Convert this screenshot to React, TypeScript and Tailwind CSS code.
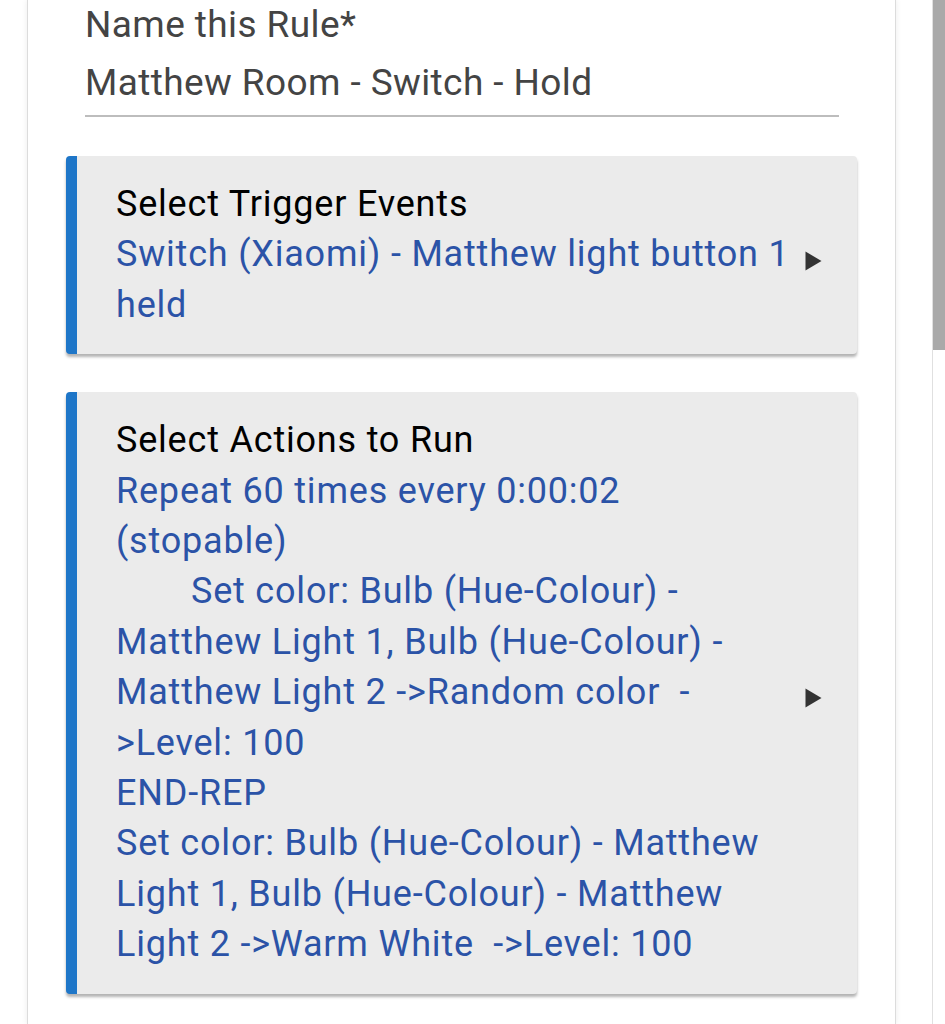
import { useState } from "react";

const Arrow = () => (
  <svg width="17" height="20" viewBox="0 0 17 20" className="shrink-0 translate-y-[6px]">
    <path d="M0.5 0.5 L16.5 10 L0.5 19.5 Z" fill="#333" />
  </svg>
);

interface CardLine {
  text: string;
  indent?: boolean;
}

interface CardProps {
  title: string;
  lines: CardLine[];
}

const RuleCard = ({ title, lines }: CardProps) => {
  return (
    <div className="flex items-center rounded-[4px] bg-[#ebebeb] border-l-[11px] border-[#1e76c8] shadow-[0_3px_3px_rgba(0,0,0,0.3)] pl-[39px] pr-[35px] pt-[23px] pb-[24px]">
      <div className="flex-1 leading-[50.4px] text-[36px] tracking-[0.8px] whitespace-pre">
        <div className="text-black">{title}</div>
        {lines.map((line, i) => (
          <div key={i} className={`text-[#2b53a7] ${line.indent ? "pl-[75px]" : ""}`}>
            {line.text}
          </div>
        ))}
      </div>
      <Arrow />
    </div>
  );
};

const App = () => {
  const [ruleName] = useState("Matthew Room - Switch - Hold");

  return (
    <div className="flex h-[1024px] overflow-hidden bg-white font-['Roboto',sans-serif]">
      <div className="w-[27px] shrink-0" />
      <main className="w-[869px] shrink-0 border-x border-[#dcdcdc] bg-white shadow-[0_0_6px_rgba(0,0,0,0.08)]">
        <div className="pl-[57px] pr-[56px] tracking-[0.4px]">
          <div className="text-[37px] leading-[50px] text-[#444]">Name this Rule*</div>
          <div className="mt-[8px] border-b-2 border-[#bdbdbd] pb-[7px] text-[37px] leading-[50px] text-[#444]">
            {ruleName}
          </div>
        </div>
        <div className="flex flex-col gap-[38px] px-[38px] pt-[39px]">
          <RuleCard
            title="Select Trigger Events"
            lines={[{ text: "Switch (Xiaomi) - Matthew light button 1" }, { text: "held" }]}
          />
          <RuleCard
            title="Select Actions to Run"
            lines={[
              { text: "Repeat 60 times every 0:00:02" },
              { text: "(stopable)" },
              { text: "Set color: Bulb (Hue-Colour) -", indent: true },
              { text: "Matthew Light 1, Bulb (Hue-Colour) -" },
              { text: "Matthew Light 2 ->Random color  -" },
              { text: ">Level: 100" },
              { text: "END-REP" },
              { text: "Set color: Bulb (Hue-Colour) - Matthew" },
              { text: "Light 1, Bulb (Hue-Colour) - Matthew" },
              { text: "Light 2 ->Warm White  ->Level: 100" },
            ]}
          />
        </div>
      </main>
      <div className="w-[36px] shrink-0" />
      <div className="w-[13px] shrink-0 border-l border-[#e0e0e0] bg-white">
        <div className="h-[350px] bg-[#a9a9a9]" />
      </div>
    </div>
  );
};

export default App;
